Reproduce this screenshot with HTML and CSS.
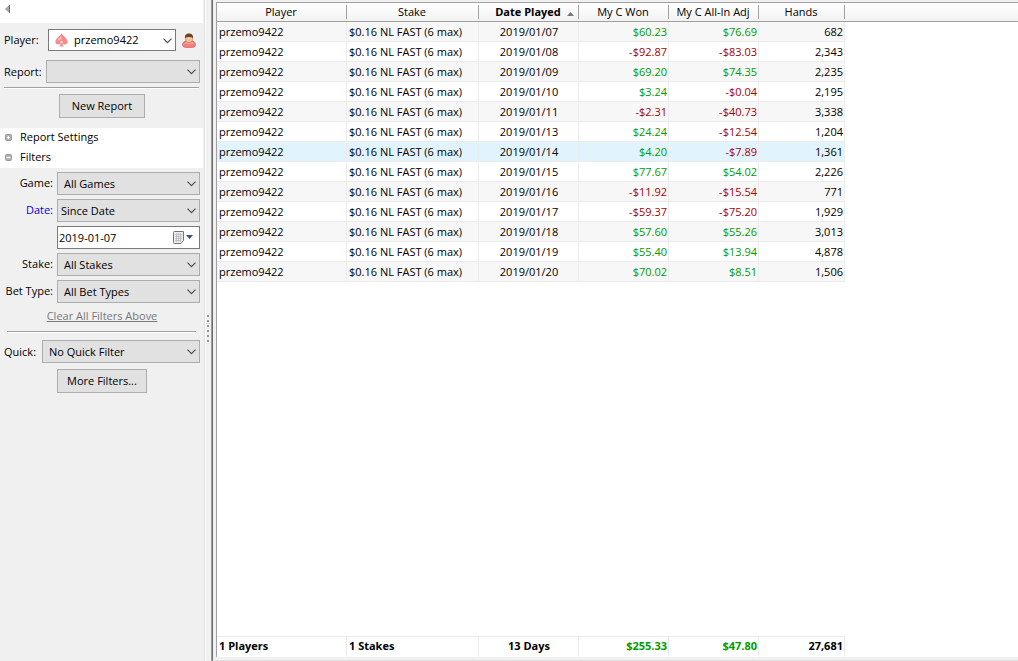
FILE: index.html
```
<!DOCTYPE html>
<html lang="en">
<head>
    <meta charset="UTF-8">
    <meta name="viewport" content="width=device-width, initial-scale=1.0">
    <title>Player Reports</title>
    <link rel="stylesheet" href="styles.css">
</head>
<body>
    <svg class="defs" width="0" height="0" aria-hidden="true">
        <symbol id="chevron" viewBox="0 0 9 6"><path d="M0.5 0.7 L4.5 4.7 L8.5 0.7" fill="none" stroke="#505050" stroke-width="1.2"/></symbol>
    </svg>
    <div class="app">
        <aside class="sidebar">
            <div class="collapse-bar">
                <button class="collapse" aria-label="Collapse panel">
                    <svg width="6" height="8" viewBox="0 0 6 8"><path d="M0.5 4 L4.5 0.5 V7.5 Z" fill="#aaa" stroke="#888" stroke-width="0.8"/><path d="M4.5 0.3 V7.7" stroke="#666"/></svg>
                </button>
            </div>
            <div class="player-row">
                <label for="player">Player:</label>
                <span class="dropdown player">
                    <svg class="spade" width="13" height="14" viewBox="0 0 13 14">
                        <path d="M6.5 0.3 C7.5 2.8 12.6 5.3 12.6 8.7 C12.6 11.7 9.2 12.2 7.5 10.5 C7.6 12 8.2 13 9 13.6 H4 C4.8 13 5.4 12 5.5 10.5 C3.8 12.2 0.4 11.7 0.4 8.7 C0.4 5.3 5.5 2.8 6.5 0.3 Z" fill="#f58a8a"/>
                        <path d="M6.3 2.5 C4.8 5 2 6.2 2 8.5 C3.5 7 5 6.5 6.5 6.5 Z" fill="#fac0c0"/>
                        <path d="M5 9 L6.5 7.5 L8 9 L6.5 10.5 Z" fill="#fff" opacity="0.8"/>
                    </svg>
                    <select id="player"><option>przemo9422</option></select>
                    <svg class="chevron" width="9" height="6"><use href="#chevron"/></svg>
                </span>
                <button class="person" aria-label="Choose player">
                    <svg width="14" height="15" viewBox="0 0 14 15">
                        <path d="M0.5 12 C0.5 9 3 8 5 7.5 H9 C11 8 13.5 9 13.5 12 C13.5 14.4 10 14.6 7 14.6 C4 14.6 0.5 14.4 0.5 12 Z" fill="#f47c7c" stroke="#d85b5b" stroke-width="0.7"/>
                        <path d="M2 11.5 C3 9.5 5 9.5 7 11 C9 9.5 11 9.5 12 11.5" fill="none" stroke="#fbb0b0"/>
                        <path d="M3.5 3.5 H10.5 V6 C10.5 8.2 9 9.5 7 9.5 C5 9.5 3.5 8.2 3.5 6 Z" fill="#f1c89a" stroke="#b17b4e" stroke-width="0.5"/>
                        <path d="M3 5.5 C2.6 1.8 4.3 0.4 7 0.4 C9.7 0.4 11.4 1.8 11 5.5 C10 3.8 8 4.2 7 4 C5.5 4 4 4 3 5.5 Z" fill="#704020"/>
                    </svg>
                </button>
            </div>
            <div class="report-row">
                <label for="report">Report:</label>
                <span class="dropdown">
                    <select id="report"><option></option></select>
                    <svg class="chevron" width="9" height="6"><use href="#chevron"/></svg>
                </span>
            </div>
            <hr class="rule">
            <button class="btn new-report">New Report</button>

            <div class="sections">
                <button class="section">
                    <svg width="7" height="7" viewBox="0 0 7 7"><rect x="0.5" y="0.5" width="6" height="6" rx="1" fill="#b4b4b4" stroke="#999"/><path d="M2 3.5 H5 M3.5 2 V5" stroke="#fff"/></svg>
                    Report Settings
                </button>
                <button class="section">
                    <svg width="7" height="7" viewBox="0 0 7 7"><rect x="0.5" y="0.5" width="6" height="6" rx="1" fill="#b4b4b4" stroke="#999"/><path d="M1.5 3.5 H5.5" stroke="#fff"/></svg>
                    Filters
                </button>
            </div>

            <div class="filters">
                <label for="game">Game:</label>
                <span class="dropdown">
                    <select id="game"><option>All Games</option></select>
                    <svg class="chevron" width="9" height="6"><use href="#chevron"/></svg>
                </span>
                <label for="date-mode" class="active">Date:</label>
                <span class="dropdown flush">
                    <select id="date-mode"><option>Since Date</option></select>
                    <svg class="chevron" width="9" height="6"><use href="#chevron"/></svg>
                </span>
                <div class="date-box">
                    <input type="text" value="2019-01-07" aria-label="Since date">
                    <button class="calendar" aria-label="Open calendar">
                        <svg width="21" height="13" viewBox="0 0 21 13">
                            <path d="M0.5 1.5 Q0.5 0.5 1.5 0.5 H10.5 V9.5 L8 12.5 H1.5 Q0.5 12.5 0.5 11.5 Z" fill="#eee" stroke="#76707a"/>
                            <path d="M2 3.5 H9 M2 5.5 H9 M2 7.5 H9 M2 9.5 H8 M3.5 2 V11 M5.5 2 V11 M7.5 2 V11" stroke="#b4b4bc" stroke-width="0.7"/>
                            <path d="M13 4 H20 L16.5 8 Z" fill="#3c5079"/>
                        </svg>
                    </button>
                </div>
                <label for="stake">Stake:</label>
                <span class="dropdown">
                    <select id="stake"><option>All Stakes</option></select>
                    <svg class="chevron" width="9" height="6"><use href="#chevron"/></svg>
                </span>
                <label for="bet-type">Bet Type:</label>
                <span class="dropdown">
                    <select id="bet-type"><option>All Bet Types</option></select>
                    <svg class="chevron" width="9" height="6"><use href="#chevron"/></svg>
                </span>
            </div>
            <a class="clear" href="#">Clear All Filters Above</a>
            <hr class="rule short">
            <div class="quick-row">
                <label for="quick">Quick:</label>
                <span class="dropdown">
                    <select id="quick"><option>No Quick Filter</option></select>
                    <svg class="chevron" width="9" height="6"><use href="#chevron"/></svg>
                </span>
            </div>
            <button class="btn more">More Filters...</button>
        </aside>

        <div class="splitter">
            <svg width="3" height="28" viewBox="0 0 3 28"><path d="M1 1 V28" stroke="#999" stroke-width="2" stroke-dasharray="2 3"/></svg>
        </div>

        <main class="report">
            <table class="grid">
                <colgroup><col class="c-player"><col class="c-stake"><col class="c-date"><col class="c-money"><col class="c-money"><col class="c-hands"><col></colgroup>
                <thead>
                    <tr>
                        <th>Player</th><th>Stake</th>
                        <th class="sorted">Date Played <svg class="sort" width="7" height="4" viewBox="0 0 7 4"><path d="M0 4 L3.5 0 L7 4 Z" fill="#777"/></svg></th>
                        <th>My C Won</th><th>My C All-In Adj</th><th>Hands</th><th></th>
                    </tr>
                </thead>
                <tbody id="rows"></tbody>
            </table>
            <div class="empty"></div>
            <table class="grid totals">
                <colgroup><col class="c-player"><col class="c-stake"><col class="c-date"><col class="c-money"><col class="c-money"><col class="c-hands"><col></colgroup>
                <tbody>
                    <tr><td>1 Players</td><td>1 Stakes</td><td>13 Days</td><td class="win">$255.33</td><td class="win">$47.80</td><td>27,681</td><td></td></tr>
                </tbody>
            </table>
        </main>
    </div>

    <script>
        const sessions = [
            ['2019/01/07', '$60.23', '$76.69', '682'],
            ['2019/01/08', '-$92.87', '-$83.03', '2,343'],
            ['2019/01/09', '$69.20', '$74.35', '2,235'],
            ['2019/01/10', '$3.24', '-$0.04', '2,195'],
            ['2019/01/11', '-$2.31', '-$40.73', '3,338'],
            ['2019/01/13', '$24.24', '-$12.54', '1,204'],
            ['2019/01/14', '$4.20', '-$7.89', '1,361'],
            ['2019/01/15', '$77.67', '$54.02', '2,226'],
            ['2019/01/16', '-$11.92', '-$15.54', '771'],
            ['2019/01/17', '-$59.37', '-$75.20', '1,929'],
            ['2019/01/18', '$57.60', '$55.26', '3,013'],
            ['2019/01/19', '$55.40', '$13.94', '4,878'],
            ['2019/01/20', '$70.02', '$8.51', '1,506']
        ];
        const money = (v) => `<td class="${v.startsWith('-') ? 'loss' : 'win'}">${v}</td>`;

        document.getElementById('rows').innerHTML = sessions.map(([date, won, adj, hands]) => `
            <tr class="${date === '2019/01/14' ? 'hover' : ''}">
                <td>przemo9422</td><td>$0.16 NL FAST (6 max)</td><td>${date}</td>
                ${money(won)}${money(adj)}<td>${hands}</td><td></td>
            </tr>`).join('');
    </script>
</body>
</html>
```
FILE: styles.css
```
* {
    box-sizing: border-box;
}
body {
    margin: 0;
    background: #f0f0f0;
    color: #000;
    font: 11px/20px "Open Sans", "Noto Sans", sans-serif;
}
.defs {
    position: absolute;
}
button, select, input {
    font: inherit;
    color: inherit;
    margin: 0;
}
button {
    padding: 0;
    border: none;
    background: none;
}
.app {
    display: flex;
    min-height: 100vh;
}

/* sidebar */
.sidebar {
    flex: 0 0 205px;
    min-width: 0;
    display: flex;
    flex-direction: column;
    border-right: 1px solid #e0e0e0;
}
.collapse-bar {
    height: 23px;
    margin-right: 1px;
    padding: 4px 5px;
    background: #fff;
}
.collapse {
    display: flex;
    height: 9px;
    align-items: center;
}
.player-row, .report-row, .quick-row {
    display: flex;
    align-items: center;
    padding: 0 4px;
}
.player-row {
    margin-top: 6px;
}
.player-row label {
    flex: 0 0 44px;
}
.report-row {
    margin-top: 9px;
}
.report-row label {
    flex: 0 0 42px;
}
.quick-row label {
    flex: 0 0 38px;
}
.dropdown {
    position: relative;
    display: flex;
    flex: 1;
    min-width: 0;
}
.dropdown select {
    width: 100%;
    min-width: 0;
    height: 23px;
    padding: 0 16px 0 6px;
    appearance: none;
    background: #e1e1e1;
    border: 1px solid #adadad;
    border-radius: 0;
}
.dropdown.flush select {
    padding-left: 3px;
}
.dropdown .chevron {
    position: absolute;
    right: 4px;
    top: 9px;
    pointer-events: none;
}
.dropdown.player select {
    height: 22px;
    padding-left: 25px;
    background: #fff;
    border-color: #7a7a7a;
}
.spade {
    position: absolute;
    left: 7px;
    top: 4px;
}
.person {
    display: flex;
    margin: 0 4px 0 6px;
}
.rule {
    height: 2px;
    margin: 4px 5px 5px 4px;
    border: none;
    border-top: 1px solid #a0a0a0;
    background: #fff;
}
.btn {
    align-self: center;
    height: 24px;
    background: #e1e1e1;
    border: 1px solid #adadad;
}
.new-report {
    width: 86px;
}
.sections {
    margin: 10px 1px 4px 0;
    background: #fff;
}
.section {
    display: flex;
    align-items: center;
    gap: 8px;
    width: 100%;
    height: 20px;
    padding: 0 0 2px 5px;
}
.filters {
    display: grid;
    grid-template-columns: 49px minmax(0, 1fr);
    column-gap: 4px;
    row-gap: 4px;
    padding: 0 4px;
}
.filters label {
    line-height: 22px;
    text-align: right;
    white-space: nowrap;
}
.filters .active {
    color: #0000e0;
}
.date-box {
    grid-column: 2;
    display: flex;
    align-items: center;
    height: 23px;
    padding-right: 5px;
    background: #fff;
    border: 1px solid #7a7a7a;
}
.date-box input {
    flex: 1;
    min-width: 0;
    padding: 0 1px;
    border: none;
    background: none;
    outline: none;
}
.calendar {
    display: flex;
}
.clear {
    align-self: center;
    margin-top: 3px;
    color: #787878;
}
.rule.short {
    margin: 5px 8px 7px 7px;
}
.more {
    width: 90px;
    margin-top: 6px;
}

.splitter {
    flex: 0 0 7px;
    padding-left: 1px;
    border-left: 1px solid #fff;
    border-right: 1px solid #a0a0a0;
}
.splitter svg {
    display: block;
    margin-top: 314px;
}

/* report */
.report {
    flex: 1;
    display: flex;
    flex-direction: column;
    min-width: 0;
    padding: 2px 0 3px 3px;
    border-left: 1px solid #696969;
    border-bottom: 1px solid #e3e3e3;
}
.grid {
    width: 100%;
    table-layout: fixed;
    border-collapse: separate;
    border-spacing: 0;
    background: #fff;
    border-left: 1px solid #a0a0a0;
}
.c-player {
    width: 130px;
}
.c-stake {
    width: 132px;
}
.c-date {
    width: 100px;
}
.c-money {
    width: 90px;
}
.c-hands {
    width: 86px;
}
.grid th {
    position: relative;
    height: 20px;
    padding: 0 2px 0 0;
    font-weight: 400;
    line-height: 18px;
    white-space: nowrap;
    border-top: 1px solid #a0a0a0;
    border-bottom: 1px solid #a0a0a0;
    background: linear-gradient(#a0a0a0, #a0a0a0) right 2px / 1px 14px no-repeat, linear-gradient(#fff, #f2f2f2);
}
.grid th:last-child {
    background: linear-gradient(#fff, #f2f2f2);
}
.grid th.sorted {
    font-weight: 700;
}
.sort {
    position: absolute;
    right: 5px;
    top: 9px;
}
.grid td {
    height: 20px;
    padding: 0 1px 0 2px;
    line-height: 19px;
    text-align: right;
    white-space: nowrap;
    border-right: 1px solid #ececec;
    border-bottom: 1px solid #ececec;
}
.grid td:nth-child(-n+2) {
    text-align: left;
}
.grid td:nth-child(3) {
    text-align: center;
}
.grid tbody tr:nth-child(odd) td {
    background: #f7f7f7;
}
.grid tbody tr.hover td {
    background: #e1f3fd;
}
.grid tbody tr td:last-child {
    background: #fff;
    border: none;
}
.grid .win {
    color: #009c00;
}
.grid .loss {
    color: #a80000;
}
.empty {
    flex: 1;
    background: #fff;
    border-left: 1px solid #a0a0a0;
}
.totals {
    font-weight: 700;
}
.grid.totals tbody tr td {
    height: 21px;
    padding-bottom: 2px;
    line-height: 18px;
    background: #fff;
    border-bottom: none;
}
.totals td:not(:last-child) {
    border-top: 1px solid #ececec;
}
```
